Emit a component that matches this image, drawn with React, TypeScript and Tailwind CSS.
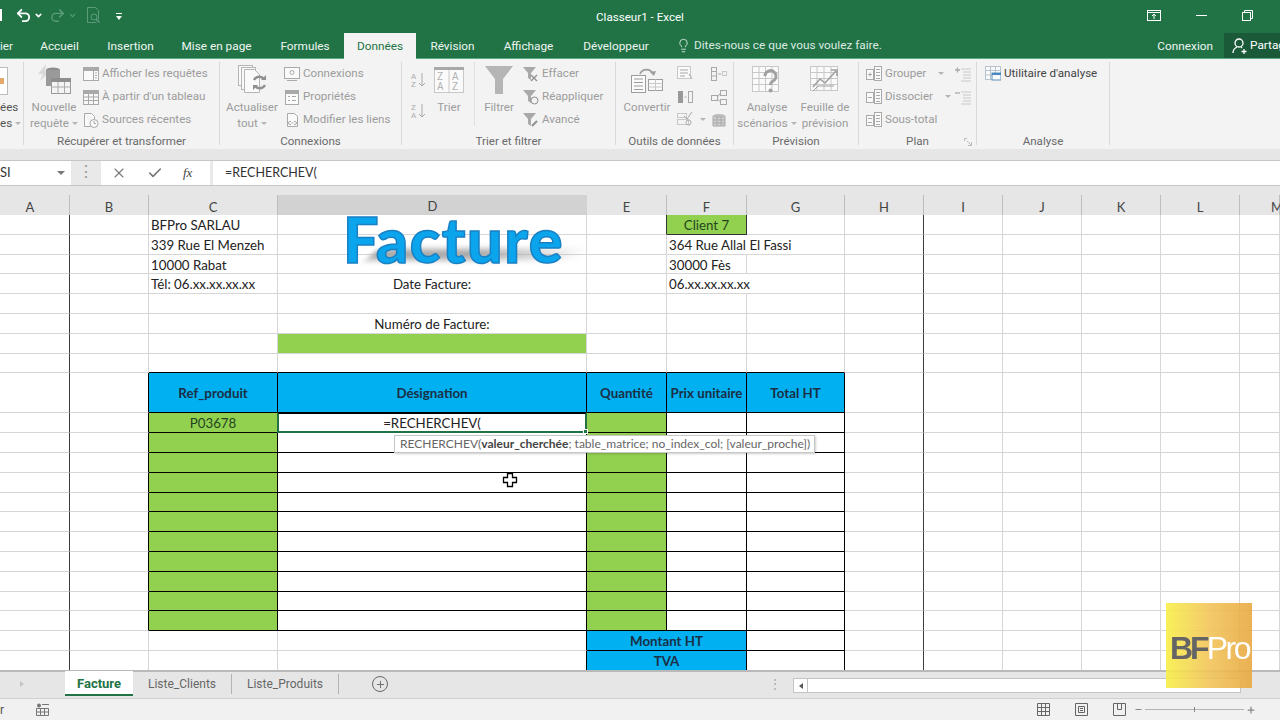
import type { ReactNode } from "react";
import { Undo2, Redo2, ChevronDown, Check, X, Lightbulb, Plus, Minus } from "lucide-react";

const COLS = ["A", "B", "C", "D", "E", "F", "G", "H", "I", "J", "K", "L", "M"];
const GRID = "grid grid-cols-[70px_79px_129px_309px_80px_80px_98px_79px_79px_79px_79px_79px_40px]";

const G = "#a9a9a9";
const L = "#c8c8c8";

function Ico({ w = 16, h = 16, children }: { w?: number; h?: number; children: ReactNode }) {
  return (
    <svg width={w} height={h} viewBox={`0 0 ${w} ${h}`} fill="none" stroke={G} strokeWidth="1" className="shrink-0">
      {children}
    </svg>
  );
}

function Caret() {
  return <span className="inline-block ml-[3px] align-middle w-0 h-0 border-x-[3px] border-x-transparent border-t-[3px] border-t-[#b5b5b5]" />;
}

function SmallBtn({ icon, label, caret, dark }: { icon: ReactNode; label: string; caret?: boolean; dark?: boolean }) {
  return (
    <div className={`flex items-center gap-[3px] h-[23px] whitespace-nowrap ${dark ? "text-[#444]" : "text-[#9c9c9c]"}`}>
      {icon}
      <span>{label}</span>
      {caret && <span className="ml-[6px]"><Caret /></span>}
    </div>
  );
}

function BigBtn({ icon, lines, width, caret }: { icon: ReactNode; lines: string[]; width: string; caret?: boolean }) {
  return (
    <div className={`flex flex-col items-center shrink-0 ${width}`}>
      <div className="h-[37px] flex items-center justify-center pb-[2px]">{icon}</div>
      <div className="text-center leading-[16px] text-[#9c9c9c] whitespace-nowrap">
        {lines.map((l, i) => (
          <div key={l}>
            {l}
            {caret && i === lines.length - 1 && <Caret />}
          </div>
        ))}
      </div>
    </div>
  );
}

function Group({ width, label, children, launcher }: { width: string; label?: string; children: ReactNode; launcher?: boolean }) {
  return (
    <div className={`flex flex-col border-r border-[#d9d9d9] shrink-0 ${width}`}>
      <div className="flex flex-1 min-h-0">{children}</div>
      <div className="relative h-[12px] leading-[16px] text-center text-[#6a6a6a] whitespace-nowrap">
        {label}
        {launcher && (
          <svg width="8" height="8" viewBox="0 0 8 8" fill="none" stroke="#bcbcbc" className="absolute right-[4px] top-[5px]">
            <path d="M.5 3V.5H3M7.5 4v3.5H4M3 3l4 4" />
          </svg>
        )}
      </div>
    </div>
  );
}

function TableIcon() {
  return (
    <Ico>
      <rect x=".5" y="1.5" width="15" height="14" fill="#f8f8f8" />
      <rect x=".5" y="1.5" width="15" height="3" fill={G} />
      <path d="M.5 8h15M.5 11.5h15M5.5 4.5v11M10.5 4.5v11" />
    </Ico>
  );
}

function MiniFunnel({ mark }: { mark: ReactNode }) {
  return (
    <Ico>
      <path d="M0 1h13L8 7v7l-3-2V7z" fill={G} stroke="none" />
      {mark}
    </Ico>
  );
}

function PlanIcon({ mark }: { mark: ReactNode }) {
  return (
    <Ico>
      <rect x=".5" y="3.5" width="7" height="10" fill="#fafafa" />
      <rect x="8.5" y=".5" width="7" height="14" fill="#fafafa" />
      <path d="M10 3.5h4M10 6.5h4M10 9.5h4M10 12.5h4" />
      {mark}
    </Ico>
  );
}

function Ribbon() {
  return (
    <div className="flex h-[90px] bg-[#f3f3f3] pt-[3px] pb-[4px] text-[11.6px] font-['Roboto',sans-serif]">
      <Group width="w-[24px]">
        <div className="w-full overflow-hidden flex flex-col items-start">
          <div className="h-[37px] flex items-center">
            <div className="w-[8px] h-[28px] bg-white border border-l-0 border-[#bbb] flex items-center">
              <div className="w-[4px] h-[6px] bg-[#e5a96a]" />
            </div>
          </div>
          <div className="text-[#555] leading-[16px] whitespace-nowrap">ées</div>
          <div className="text-[#555] leading-[16px] whitespace-nowrap">
            es<Caret />
          </div>
        </div>
      </Group>

      <Group width="w-[196px]" label="Récupérer et transformer">
        <div className="pl-[3px] flex">
          <BigBtn
            width="w-[54px]"
            lines={["Nouvelle", "requête"]}
            caret
            icon={
              <svg width="34" height="32" viewBox="0 0 34 32">
                <path d="M9 0 1 10h5L3 17l10-10H8z" fill="#d9d9d9" />
                <ellipse cx="16" cy="6" rx="7" ry="2.5" fill="#8e8e8e" />
                <path d="M9 6v16h14V6z" fill="#9a9a9a" />
                <rect x="14.5" y="14.5" width="19" height="15" fill="#f4f4f4" stroke="#9a9a9a" />
                <rect x="14" y="14" width="20" height="4" fill="#8e8e8e" />
                <path d="M14.5 23h19M21 18v12M27.5 18v12" stroke="#aaa" />
              </svg>
            }
          />
          <div className="ml-[2px]">
            <SmallBtn
              label="Afficher les requêtes"
              icon={
                <Ico>
                  <rect x=".5" y="1.5" width="15" height="13" fill="#fafafa" />
                  <rect x=".5" y="1.5" width="15" height="3" fill={G} />
                  <path d="M10.5 4.5v10M12 7h2M12 9.5h2M12 12h2" />
                </Ico>
              }
            />
            <SmallBtn label="À partir d'un tableau" icon={<TableIcon />} />
            <SmallBtn
              label="Sources récentes"
              icon={
                <Ico>
                  <path d="M1.5 1.5h7l3 3V7M1.5 1.5v13h6" fill="#fafafa" />
                  <circle cx="11" cy="11.5" r="4" fill="#fafafa" />
                  <path d="M11 9v2.5h2" />
                </Ico>
              }
            />
          </div>
        </div>
      </Group>

      <Group width="w-[182px]" label="Connexions">
        <div className="pl-[3px] flex">
          <BigBtn
            width="w-[58px]"
            lines={["Actualiser", "tout"]}
            caret
            icon={
              <svg width="30" height="32" viewBox="0 0 30 32" fill="#fafafa" stroke="#b5b5b5">
                <rect x="1.5" y="1.5" width="14" height="20" />
                <rect x="4.5" y="3.5" width="14" height="22" />
                <path d="M7.5 5.5h10l5 5v18h-15z" />
                <path d="M17 16a6 6 0 0 1 10-1M28 21a6 6 0 0 1-10 1" fill="none" stroke="#8f8f8f" strokeWidth="2.4" />
                <path d="m24 16 5 0 0-5zM21 21l-5 0 0 5z" fill="#8f8f8f" stroke="none" />
              </svg>
            }
          />
          <div className="ml-[3px]">
            <SmallBtn
              label="Connexions"
              icon={
                <Ico>
                  <rect x=".5" y="1.5" width="15" height="11" fill="#fafafa" />
                  <circle cx="8" cy="6.5" r="2" />
                  <path d="M3 14.5h10" />
                </Ico>
              }
            />
            <SmallBtn
              label="Propriétés"
              icon={
                <Ico>
                  <rect x="1.5" y="1.5" width="13" height="14" fill="#fafafa" />
                  <rect x="1.5" y="1.5" width="13" height="3" fill={G} />
                  <path d="M4 7.5h2M8 7.5h4M4 11.5h2M8 11.5h4" />
                </Ico>
              }
            />
            <SmallBtn
              label="Modifier les liens"
              icon={
                <Ico>
                  <path d="M3.5 1.5h7l3 3v10h-10z" fill="#fafafa" />
                  <path d="M7 12.5h-1a1.5 1.5 0 0 1 0-3h1M10 9.5h1a1.5 1.5 0 0 1 0 3h-1M7.5 11h2" />
                </Ico>
              }
            />
          </div>
        </div>
      </Group>

      <Group width="w-[214px]" label="Trier et filtrer">
        <div className="flex">
          <div className="w-[30px] pl-[9px] pt-[10px] flex flex-col gap-[15px] shrink-0">
            {[["A", "Z"], ["Z", "A"]].map((p) => (
              <svg key={p[0]} width="16" height="16" viewBox="0 0 16 16">
                <text x="0" y="7" fontSize="8" fill={G}>{p[0]}</text>
                <text x="0" y="15" fontSize="8" fill={G}>{p[1]}</text>
                <path d="M11 1v13M8 11l3 3 3-3" fill="none" stroke={G} />
              </svg>
            ))}
          </div>
          <div className="w-[34px] flex flex-col items-center shrink-0">
            <div className="h-[37px] flex items-center pb-[2px]">
              <svg width="30" height="26" viewBox="0 0 30 26" fill="#fafafa" stroke={L}>
                <rect x=".5" y=".5" width="29" height="25" />
                <rect x="0" y="0" width="30" height="3" fill={G} stroke="none" />
                <path d="M15 3v23" />
                <g fill="#b0b0b0" stroke="none" fontSize="10">
                  <text x="3" y="13">Z</text>
                  <text x="3" y="23">A</text>
                  <text x="18" y="13">A</text>
                  <text x="18" y="23">Z</text>
                </g>
              </svg>
            </div>
            <div className="leading-[16px] text-[#9c9c9c]">Trier</div>
          </div>
          <div className="w-px h-[64px] bg-[#e0e0e0] ml-[8px]" />
          <BigBtn
            width="w-[48px]"
            lines={["Filtrer"]}
            icon={
              <svg width="28" height="28" viewBox="0 0 28 28">
                <path d="M0 0h28L18 13v15h-8V13z" fill="#b5b5b5" />
              </svg>
            }
          />
          <div>
            <SmallBtn label="Effacer" icon={<MiniFunnel mark={<path d="m8 9 6 6m0-6-6 6" stroke="#8f8f8f" strokeWidth="1.4" />} />} />
            <SmallBtn label="Réappliquer" icon={<MiniFunnel mark={<circle cx="11.5" cy="11.5" r="3.5" stroke="#8f8f8f" fill="#f3f3f3" />} />} />
            <SmallBtn label="Avancé" icon={<MiniFunnel mark={<path d="m9 14 5-5" stroke="#8f8f8f" strokeWidth="2" />} />} />
          </div>
        </div>
      </Group>

      <Group width="w-[118px]" label="Outils de données">
        <div className="pl-[4px] flex">
          <BigBtn
            width="w-[54px]"
            lines={["Convertir"]}
            icon={
              <svg width="32" height="28" viewBox="0 0 32 28" fill="#fafafa" stroke="#9c9c9c">
                <rect x=".5" y="9.5" width="14" height="17" />
                <path d="M3 13h9M3 16.5h9M3 20h9M3 23.5h9" />
                <rect x="17.5" y="13.5" width="14" height="11" />
                <path d="M17.5 17.5h14M24.5 13.5v11M17.5 21h14" stroke={L} />
                <path d="M9 8a7 7 0 0 1 13 0" fill="none" strokeWidth="1.6" />
                <path d="m19 6 4 4 2-5z" fill="#9c9c9c" stroke="none" />
              </svg>
            }
          />
          <div className="ml-[3px] grid grid-cols-[34px_16px] auto-rows-[23px] items-center">
            <Ico>
              <rect x=".5" y=".5" width="13" height="12" fill="#fafafa" stroke={L} />
              <path d="M3 4h8M3 7h8M3 10h5M12 8l3 5" stroke={G} />
            </Ico>
            <Ico>
              <rect x=".5" y="1.5" width="5" height="13" stroke={G} />
              <path d="M.5 5.5h5M.5 10h5M7 8h3" />
              <rect x="11.5" y="5.5" width="4" height="4" stroke={L} />
            </Ico>
            <Ico>
              <rect x="1" y="2" width="5" height="12" fill="#999" stroke="none" />
              <path d="M7.5 8h2" />
              <rect x="11.5" y="2.5" width="4" height="11" />
            </Ico>
            <Ico>
              <rect x="9.5" y="1.5" width="6" height="5" />
              <rect x="9.5" y="10.5" width="6" height="5" />
              <rect x=".5" y="6.5" width="6" height="5" />
              <path d="M6.5 8 9.5 4M6.5 10l3 3" />
            </Ico>
            <div className="flex items-center">
              <Ico>
                <rect x=".5" y="8.5" width="11" height="5" stroke={L} />
                <rect x=".5" y="2.5" width="9" height="4" stroke={L} />
                <path d="m7 5 3 3 5-7" />
                <circle cx="11.5" cy="11.5" r="2.5" />
              </Ico>
              <span className="ml-[4px]"><Caret /></span>
            </div>
            <Ico>
              <path d="M2 4h12v10H2z" fill="#d0d0d0" />
              <ellipse cx="8" cy="4" rx="6" ry="2" fill="#bbb" stroke="none" />
              <path d="M2 8h12M2 11h12M6 4v10M10 4v10" />
            </Ico>
          </div>
        </div>
      </Group>

      <Group width="w-[125px]" label="Prévision">
        <div className="pl-[3px] flex">
          <BigBtn
            width="w-[60px]"
            lines={["Analyse", "scénarios"]}
            caret
            icon={
              <svg width="30" height="28" viewBox="0 0 30 28" fill="none" stroke={L}>
                <rect x=".5" y=".5" width="26" height="25" fill="#fafafa" />
                <path d="M.5 6.5h26M.5 12.5h26M.5 18.5h26M7 .5v25M13.5 .5v25M20 .5v25" />
                <path d="M13 10a5.5 5.5 0 1 1 8 5c-2 1-2.500 2-2.500 4" stroke="#a0a0a0" strokeWidth="3" />
                <circle cx="18.500" cy="24.500" r="2" fill="#a0a0a0" stroke="none" />
              </svg>
            }
          />
          <div className="ml-[-4px]">
            <BigBtn
              width="w-[64px]"
              lines={["Feuille de", "prévision"]}
              icon={
                <svg width="30" height="27" viewBox="0 0 30 27" fill="none" stroke={L}>
                  <rect x=".5" y=".5" width="27" height="24" fill="#fafafa" />
                  <path d="M.5 6.5h27M.5 12.5h27M.5 18.5h27M7 .5v24M14 .5v24M21 .5v24" />
                  <path d="m3 21 7-8 5 4 11-12" stroke="#a0a0a0" strokeWidth="1.6" />
                  <path d="m21 4h6v6" stroke="#a0a0a0" strokeWidth="1.6" />
                  <path d="m3 25 5-5h16" stroke="#a0a0a0" />
                </svg>
              }
            />
          </div>
        </div>
      </Group>

      <Group width="w-[118px]" label="Plan" launcher>
        <div className="pl-[7px] flex">
          <div className="w-[89px] shrink-0">
            <SmallBtn caret label="Grouper" icon={<PlanIcon mark={<path d="M2 8.500h4M4 6.500v4" />} />} />
            <SmallBtn caret label="Dissocier" icon={<PlanIcon mark={<path d="M2 8.500h4" />} />} />
            <SmallBtn label="Sous-total" icon={<PlanIcon mark={<path d="M2 6.500h4M2 10.500h4" />} />} />
          </div>
          <div className="shrink-0">
            <div className="h-[23px] flex items-center">
              <Ico>
                <path d="M6 3h10M8 6h8M8 9h8M8 12h8M6 15h10" stroke={L} />
                <path d="M0 4h5M2.500 1.500v5" stroke={G} strokeWidth="1.3" />
              </Ico>
            </div>
            <div className="h-[23px] flex items-center">
              <Ico>
                <path d="M6 3h10M8 6h8M8 9h8M8 12h8M6 15h10" stroke={L} />
                <path d="M0 4h5" stroke={G} strokeWidth="1.3" />
              </Ico>
            </div>
          </div>
        </div>
      </Group>

      <Group width="w-[133px]" label="Analyse">
        <div className="pl-[8px]">
          <SmallBtn
            dark
            label="Utilitaire d'analyse"
            icon={
              <svg width="16" height="16" viewBox="0 0 16 16" fill="none" stroke="#b7c4d0" className="shrink-0">
                <rect x=".5" y=".5" width="15" height="13" fill="#fafafa" />
                <path d="M.5 4.500h15M.5 9h15M5.500 .5v13M10.500 .5v13" />
                <rect x="7" y="7" width="9" height="7" fill="#fafafa" stroke="#5b8fbd" />
                <rect x="7" y="7" width="9" height="2" fill="#4a86c0" stroke="none" />
              </svg>
            }
          />
        </div>
      </Group>
    </div>
  );
}

const TABS: [string, string][] = [
  ["Accueil", "w-[69px]"],
  ["Insertion", "w-[73px]"],
  ["Mise en page", "w-[99px]"],
  ["Formules", "w-[78px]"],
];
const TABS2: [string, string][] = [
  ["Révision", "w-[73px]"],
  ["Affichage", "w-[79px]"],
  ["Développeur", "w-[96px]"],
];

function TitleBar() {
  return (
    <div className="bg-[#217346] text-white font-['Roboto',sans-serif]">
      <div className="h-[33px] grid grid-cols-[1fr_auto_1fr] items-center">
        <div className="flex items-center pb-[3px]">
          <div className="w-[2px] h-[12px] bg-white" />
          <Undo2 size={17} strokeWidth={2.6} className="ml-[13px]" />
          <ChevronDown size={9} strokeWidth={4} className="ml-[2px]" />
          <Redo2 size={17} strokeWidth={2} className="ml-[6px] text-[#5c9c7a]" />
          <ChevronDown size={9} strokeWidth={3} className="ml-[2px] text-[#5c9c7a]" />
          <svg width="15" height="17" viewBox="0 0 15 17" fill="none" stroke="#5c9c7a" className="ml-[9px]">
            <path d="M1.500 .5h8l3 3v9M1.500 .5v15h9" />
            <circle cx="8" cy="10" r="3" />
            <path d="m10 12 3.500 3.500" strokeWidth="1.500" />
          </svg>
          <div className="ml-[15px] mt-[3px] flex flex-col items-center gap-[2px]">
            <div className="w-[6px] h-px bg-white" />
            <div className="w-0 h-0 border-x-[3.500px] border-x-transparent border-t-[4px] border-t-white" />
          </div>
        </div>
        <div className="text-[11.6px] pt-[3px]">Classeur1 - Excel</div>
        <div className="flex items-center justify-end gap-[35px] pr-[27px] pb-[3px]">
          <svg width="14" height="11" viewBox="0 0 14 11" fill="none" stroke="white">
            <rect x=".5" y=".5" width="13" height="10" />
            <path d="M.5 2.500h13M7 9V4M5 6l2-2 2 2" />
          </svg>
          <div className="w-[11px] h-px bg-white" />
          <svg width="11" height="11" viewBox="0 0 11 11" fill="none" stroke="white">
            <rect x=".5" y="2.500" width="8" height="8" />
            <path d="M2.500 2.500v-2h8v8h-2" />
          </svg>
        </div>
      </div>
      <div className="h-[26px] flex text-[11.8px] border-b border-[#5fa884]">
        <div className="w-[25px] text-right pr-[13px] leading-[27px] text-[#e8f1ec]">ier</div>
        {TABS.map(([t, w]) => (
          <div key={t} className={`${w} text-center leading-[27px] text-[#f0f5f2]`}>{t}</div>
        ))}
        <div className="w-[72px] h-[26px] bg-[#f3f3f3] text-center leading-[27px] text-[#217346]">Données</div>
        {TABS2.map(([t, w]) => (
          <div key={t} className={`${w} text-center leading-[27px] text-[#f0f5f2]`}>{t}</div>
        ))}
        <div className="flex flex-1 items-center gap-[3px] pl-[12px] text-[#dde9e2] whitespace-nowrap">
          <Lightbulb size={15} strokeWidth={1.4} />
          <span className="pt-[1px]">Dites-nous ce que vous voulez faire.</span>
        </div>
        <div className="leading-[27px] mr-[11px] text-[#f0f5f2]">Connexion</div>
        <div className="w-[56px] bg-[#1b5a38] flex items-center gap-[3px] pl-[8px] overflow-hidden whitespace-nowrap">
          <svg width="15" height="16" viewBox="0 0 15 16" fill="none" stroke="white" strokeWidth="1.3" className="shrink-0">
            <circle cx="7" cy="5" r="4" />
            <path d="M1 15c0-3 2-5 4-6M9 9l1 1M9.500 13.500h5M12 11v5" />
          </svg>
          <span className="pt-[1px]">Partag</span>
        </div>
      </div>
    </div>
  );
}

function FormulaBar() {
  return (
    <div className="bg-[#e6e6e6] h-[46px] pt-[11px] font-['Roboto',sans-serif]">
      <div className="h-[26px] flex border-t border-b border-[#c6c6c6] bg-[#e9e9e9]">
        <div className="w-[71px] bg-white flex items-center justify-between pr-[6px] text-[13px] text-[#333]">
          <span className="font-['Lato',sans-serif]">SI</span>
          <div className="w-0 h-0 border-x-[4px] border-x-transparent border-t-[4px] border-t-[#777]" />
        </div>
        <div className="w-[30px] flex items-center justify-center text-[#999] leading-none pb-[2px]">⋮</div>
        <div className="w-[109px] bg-white flex items-center gap-[20px] pl-[10px] text-[#777]">
          <X size={16} strokeWidth={1.6} />
          <Check size={16} strokeWidth={2.4} />
          <span className="font-['Liberation_Serif',serif] italic text-[13px] text-[#444]">fx</span>
        </div>
        <div className="ml-[3px] flex-1 bg-white flex items-center pl-[12px] pt-[1px] text-[12.5px] text-[#333] font-['Lato',sans-serif]">=RECHERCHEV(</div>
      </div>
    </div>
  );
}

type CellDef = { text?: ReactNode; cls?: string; span?: boolean };

const HEAD = "bg-[#00b0f0] font-bold text-[#1b2f45] text-center";
const GREEN = "bg-[#92d050]";
const CENTER = "text-center";

// rows of what is visible, keyed by column
const ROWS: Record<string, CellDef>[] = [
  { C: { text: "BFPro SARLAU" }, F: { text: "Client 7", cls: `${GREEN} ${CENTER} text-[#24451f]` } },
  { C: { text: "339 Rue El Menzeh" }, F: { text: "364 Rue Allal El Fassi", span: true } },
  { C: { text: "10000 Rabat" }, F: { text: "30000 Fès" } },
  { C: { text: "Tél: 06.xx.xx.xx.xx" }, D: { text: "Date Facture:", cls: CENTER }, F: { text: "06.xx.xx.xx.xx", span: true } },
  {},
  { D: { text: "Numéro de Facture:", cls: CENTER } },
  { D: { cls: GREEN } },
  {},
  {
    C: { text: "Ref_produit", cls: HEAD },
    D: { text: "Désignation", cls: HEAD },
    E: { text: "Quantité", cls: HEAD },
    F: { text: "Prix unitaire", cls: HEAD },
    G: { text: "Total HT", cls: HEAD },
  },
  { C: { text: "P03678", cls: `${GREEN} ${CENTER} text-[#24451f]` }, D: { text: "=RECHERCHEV(", cls: CENTER }, E: { cls: GREEN } },
  ...Array.from({ length: 10 }, () => ({ C: { cls: GREEN }, E: { cls: GREEN } })),
  { E: { text: "Montant HT", cls: HEAD, span: true } },
  { E: { text: "TVA", cls: HEAD, span: true } },
];

function rightLine(col: string, row: number, span?: boolean) {
  if (col === "A" || col === "H") return "border-r-[#3d3d3d]";
  if (row === 0 && "EF".includes(col)) return "border-r-[#333]";
  const inTable = row >= 8 && row <= 19;
  const foot = row >= 20;
  if (inTable && "BCDEFG".includes(col)) return "border-r-black";
  if (foot && "DFG".includes(col)) return "border-r-black";
  if (foot && col === "E" && span) return "border-r-black";
  return "border-r-[#d6d6d6]";
}

function bottomLine(col: string, row: number) {
  if (row === 0 && col === "F") return "border-b-[#333]";
  if (row >= 7 && row <= 19 && "CDEFG".includes(col)) return "border-b-black";
  if (row >= 20 && "EFG".includes(col)) return "border-b-black";
  return "border-b-[#d6d6d6]";
}

function Sheet() {
  return (
    <div className="relative flex-1 min-h-0 overflow-hidden bg-white font-['Lato',sans-serif] text-[13.3px] text-[#222]">
      <div className={`${GRID} grid-rows-[repeat(8,19.8px)_40px_repeat(13,19.8px)]`}>
        {ROWS.map((row, r) =>
          COLS.map((col, c) => {
            const prev = COLS[c - 1];
            if (prev && row[prev]?.span) return null;
            const def = row[col] ?? {};
            const editing = r === 9 && col === "D";
            return (
              <div
                key={`${col}${r}`}
                className={`${def.span ? "col-span-2" : ""} ${editing ? "relative" : ""} border-r border-b px-[2px] pt-[3px] flex items-center min-w-0 whitespace-nowrap ${def.cls ?? ""} ${
                  def.cls?.includes("text-center") ? "justify-center" : ""
                } ${rightLine(col, r, def.span)} ${bottomLine(col, r)}`}
              >
                {def.text}
                {editing && (
                  <div className="absolute -left-px -top-px -right-px -bottom-px border-2 border-[#217346] border-t-black">
                    <div className="absolute -right-[3px] -bottom-[3px] w-[5px] h-[5px] bg-[#217346] border border-white" />
                  </div>
                )}
              </div>
            );
          })
        )}
      </div>

      {/* wordart shadow */}
      <div className="absolute left-[372px] top-[34px] w-[212px] h-[11px] bg-gradient-to-r from-[#a8a8a8] via-[#a8a8a8] to-transparent blur-[3px] [transform:skewX(-45deg)]" />

      {/* formula tooltip */}
      <div className="absolute left-[394px] top-[220px] h-[18px] w-[421px] flex items-center pl-[5px] bg-white border border-[#c6c6c6] shadow-[1px_1px_2px_rgba(0,0,0,0.2)] text-[12px] text-[#666] whitespace-nowrap">
        RECHERCHEV(<span className="font-bold text-[#444]">valeur_cherchée</span>; table_matrice; no_index_col; [valeur_proche])
      </div>

      {/* mouse cursor */}
      <svg width="16" height="16" viewBox="0 0 16 16" className="absolute left-[502px] top-[257px]">
        <path d="M5.500 1.500h5v4h4v5h-4v4h-5v-4h-4v-5h4z" fill="white" stroke="black" strokeWidth="1.300" />
      </svg>
    </div>
  );
}

function Footer() {
  return (
    <div className="font-['Roboto',sans-serif] text-[12px]">
      <div className="h-[28px] bg-[#e6e6e6] border-t-2 border-[#b9b9b9] flex items-start relative">
        <div className="w-[65px] h-[24px] flex items-center pl-[20px]">
          <div className="w-0 h-0 border-y-[3.500px] border-y-transparent border-l-[4px] border-l-[#c4c4c4]" />
        </div>
        <div className="w-[68px] h-[25px] pt-[2px] bg-white border-b-2 border-[#217346] flex items-center justify-center font-bold text-[13px] text-[#217346] -mt-[1px]">Facture</div>
        <div className="w-[99px] h-[20px] mt-[2px] border-r border-[#b4b4b4] flex items-center justify-center text-[#666]">Liste_Clients</div>
        <div className="w-[107px] h-[20px] mt-[2px] border-r border-[#b4b4b4] flex items-center justify-center text-[#666]">Liste_Produits</div>
        <div className="ml-[33px] mt-[4px] w-[16px] h-[16px] rounded-full border border-[#666] flex items-center justify-center text-[#666]">
          <Plus size={11} strokeWidth={2} />
        </div>
        <div className="ml-[381px] mt-[5px] text-[#aaa] leading-[14px]">⋮</div>
        <div className="ml-[12px] mt-[6px] w-[448px] h-[15px] flex border border-[#c4c4c4] bg-white">
          <div className="w-[14px] border-r border-[#c4c4c4] flex items-center justify-center">
            <div className="w-0 h-0 border-y-[3.500px] border-y-transparent border-r-[4px] border-r-[#555]" />
          </div>
        </div>
      </div>
      <div className="h-[22px] bg-[#f1f1f1] border-t border-[#d0d0d0] flex items-center text-[#555]">
        <span className="w-[36px]">r</span>
        <svg width="13" height="13" viewBox="0 0 13 13" fill="none" stroke="#777">
          <circle cx="3" cy="2.500" r="2" fill="#777" stroke="none" />
          <path d="M6 1.500h7M.5 5.500h12v7H.5zM4.500 5.500v7M8.500 5.500v7M.5 9h12" />
        </svg>
        <div className="ml-[988px] flex items-center gap-[25px]">
          <svg width="13" height="13" viewBox="0 0 13 13" fill="none" stroke="#666">
            <path d="M.5.5h12v12H.5zM.5 4.500h12M.5 8.500h12M4.500.5v12M8.500.5v12" />
          </svg>
          <svg width="13" height="13" viewBox="0 0 13 13" fill="none" stroke="#666">
            <path d="M.5.5h12v12H.5zM3.500 3.500h6v6h-6zM5 5.500h3M5 7.500h3" />
          </svg>
          <svg width="13" height="13" viewBox="0 0 13 13" fill="none" stroke="#666">
            <path d="M.5.5h12v12H.5zM4.500.5v6h4v-6" />
          </svg>
        </div>
        <Minus size={9} strokeWidth={3} className="ml-[8px] text-[#888]" />
        <div className="relative w-[99px] h-px bg-[#b4b4b4] mx-[2px]">
          <div className="absolute left-[49px] -top-[2px] w-px h-[5px] bg-[#888]" />
        </div>
        <Plus size={10} strokeWidth={3} className="text-[#888]" />
      </div>
    </div>
  );
}

export default function App() {
  return (
    <div className="relative w-[1280px] h-[720px] overflow-hidden flex flex-col bg-white">
      <TitleBar />
      <Ribbon />
      <FormulaBar />
      <div className={`${GRID} h-[20px] bg-[#e6e6e6] font-['Lato',sans-serif] text-[13px] text-[#444] shrink-0 overflow-hidden`}>
        {COLS.map((c) => (
          <div
            key={c}
            className={`flex items-center pt-[2px] ${c === "A" ? "justify-center pr-[9px]" : c === "M" ? "pl-[31px]" : "justify-center"} ${
              c === "D" ? "bg-[#d2d2d2] border-b-2 border-[#217346]" : "border-r border-[#bdbdbd] border-b border-b-[#bfbfbf]"
            }`}
          >
            {c}
          </div>
        ))}
      </div>
      <Sheet />
      <Footer />

      {/* wordart title, lies over the sheet */}
      <div className="absolute left-[343px] top-[216px] font-['Lato',sans-serif] font-black text-[63px] leading-[46px] tracking-[1.5px] text-[#0aa5ec] [-webkit-text-stroke:1.5px_#1a80c4]">
        Facture
      </div>

      {/* channel logo watermark, lies over sheet and scrollbar */}
      <div className="absolute left-[1166px] top-[603px] w-[86px] h-[85px] opacity-90 bg-gradient-to-r from-[#f8ef47] via-[#f2c55a] to-[#e8a942] flex items-end pb-[25px] pl-[4px] font-['Liberation_Sans',sans-serif] text-[32px] leading-[30px] tracking-[-3px]">
        <span className="font-bold text-[#555]">BF</span>
        <span className="text-white tracking-[-2.500px]">Pro</span>
      </div>
    </div>
  );
}
